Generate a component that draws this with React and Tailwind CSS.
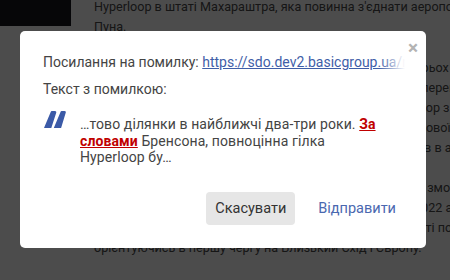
import React from "react";

function QuoteMark() {
  return (
    <svg width="22" height="17" viewBox="0 0 22 17" className="shrink-0 -mt-[5px]">
      <path d="M0 17 L7.3 17 L12.3 1.6 Q12.6 0 11 0 L7.9 0 Q6.9 0 6.6 1.2 Z" fill="#3b5aa7" />
      <path d="M9.8 17 L17.1 17 L21.8 1.6 Q22.1 0 20.5 0 L17.7 0 Q16.7 0 16.4 1.2 Z" fill="#3b5aa7" />
    </svg>
  );
}

export default function App() {
  return (
    <div className="relative w-[450px] h-[280px] overflow-hidden bg-white" style={{ fontFamily: "Roboto, 'Liberation Sans', sans-serif" }}>
      {/* page behind */}
      <div className="flex gap-[23px] -mt-[3px] text-[12.6px] leading-[20px] text-[#4a4a4a] whitespace-nowrap">
        <div className="w-[71px] h-[29px] bg-[#14141c] shrink-0" />
        <div className="w-[520px] shrink-0">
          <p className="mb-[21px]">
            Hyperloop в штаті Махараштра, яка повинна з'єднати аеропорт Мумбаї і<br />
            Пуна.
          </p>
          <p className="mb-[20px]">
            Компанія планує збудувати тестову ділянку протягом трьох років,<br />
            років, після чого почнуться будівництво, та комерційні перевезення<br />
            пасажирів. Одна лінія системи вже тестується а Hyperloop з<br />
            у Дубаї та Абу-Дабі компанія вже розпочала вивчення нової траси,<br />
            а сама мережа, за оцінками, охопить ще декілька містов в агломерації.
          </p>
          <p>
            Раніше компанія заявляла, що вона хотіла би отримати змогу запустити<br />
            перші лінії Hyperloop One до 2021 року, а вже у 2021 – 2022 а також<br />
            Компанія ще підписала ряд угод з урядами у всьому світі по<br />
            орієнтуючись в першу чергу на Близький Схід і Європу.
          </p>
        </div>
      </div>
      <div className="absolute inset-0 bg-black/70" />

      {/* modal */}
      <div className="absolute left-[20px] top-[31px] w-[406px] h-[217px] bg-white rounded-[5px] pl-[23px] pr-[21px] pt-[21px] text-[14px] text-[#444]">
        <div className="absolute right-[8px] top-[7px] text-[#b3b3b3] text-[19px] leading-[20px] font-bold">×</div>
        <div className="relative overflow-hidden whitespace-nowrap leading-[20px]">
          Посилання на помилку:{" "}
          <span className="text-[#3f5ea8] underline">https://sdo.dev2.basicgroup.ua/news/hyperloop</span>
          <div className="absolute right-0 top-0 h-full w-[26px] bg-gradient-to-r from-white/0 to-white" />
        </div>
        <div className="mt-[7px] leading-[20px]">Текст з помилкою:</div>
        <div className="flex gap-[14px] mt-[17px] ml-[1px]">
          <QuoteMark />
          <div className="leading-[16.5px] pr-[18px] tracking-[0.1px]">
            …тово ділянки в найближчі два-три роки.{" "}
            <span className="text-[#c00000] font-bold underline">За словами</span> Бренсона, повноцінна гілка Hyperloop бу…
          </div>
        </div>
        <div className="absolute right-[30px] bottom-[23px] flex items-center gap-[23px] text-[14.5px]">
          <button className="h-[33px] px-[9px] rounded-[4px] bg-[#e6e6e6] text-[#333]">Скасувати</button>
          <button className="text-[#4a68b0]">Відправити</button>
        </div>
      </div>
    </div>
  );
}
